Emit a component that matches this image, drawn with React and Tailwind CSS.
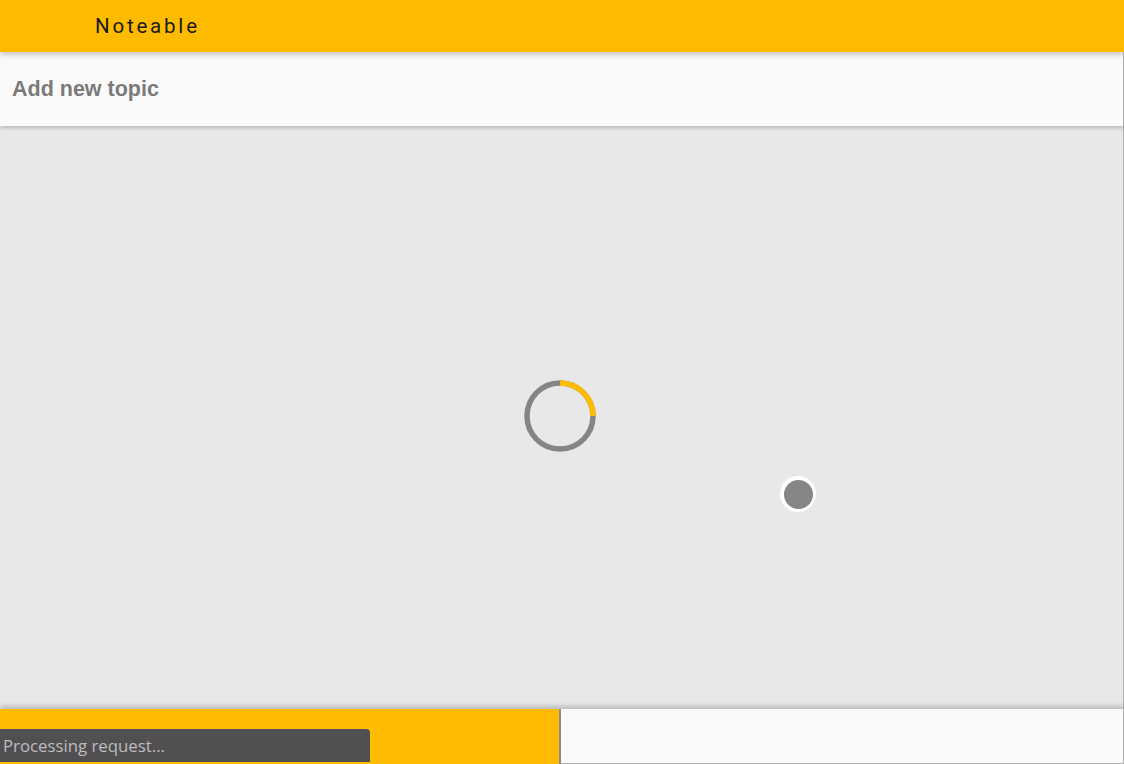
import React from "react";

function Spinner() {
  return (
    <svg width="76" height="76" viewBox="0 0 76 76">
      <circle cx="38" cy="38" r="33" fill="none" stroke="#858585" strokeWidth="5.5" />
      <path d="M38 5 A33 33 0 0 1 71 38" fill="none" stroke="#ffbb00" strokeWidth="5.5" />
    </svg>
  );
}

export default function App() {
  return (
    <div className="w-[1124px] h-[764px] flex flex-col bg-[#e8e8e8] overflow-hidden relative" style={{ fontFamily: "Roboto, sans-serif" }}>
      <header className="h-[52px] bg-[#ffbb00] flex items-center pl-[95px] shadow-[0_2px_6px_rgba(0,0,0,0.25)] relative z-20">
        <span className="text-[20.5px] tracking-[2.8px] text-[#1a1a1a]">Noteable</span>
      </header>

      <div className="h-[74px] bg-[#fafafa] flex items-center pl-3 shadow-[0_2px_4px_rgba(0,0,0,0.2)] relative z-10 border-r border-[#b0b0b0]">
        <span className="text-[21.5px] font-bold text-[#7a7a7a]" style={{ fontFamily: "'Liberation Sans', Arial, sans-serif" }}>
          Add new topic
        </span>
      </div>

      <main className="flex-1 relative border-r border-[#b0b0b0]">
        <div className="absolute left-[522px] top-[252px]">
          <Spinner />
        </div>
        <div className="absolute left-[780px] top-[350px] w-[36px] h-[36px] rounded-full bg-white flex items-center justify-center">
          <div className="w-[29px] h-[29px] rounded-full bg-[#858585]" />
        </div>
      </main>

      <footer className="h-[55px] flex shadow-[0_-3px_5px_rgba(0,0,0,0.2)] relative z-10">
        <div className="w-[561px] bg-[#ffbb00] border-r-2 border-[#8a8a8a]" />
        <div className="flex-1 bg-[#fafafa] border-r border-b border-[#b0b0b0]" />
      </footer>

      <div className="absolute left-0 bottom-[2px] w-[370px] h-[33px] bg-[#524f52] rounded-tr-[4px] flex items-center pl-[3px] z-30">
        <span className="text-[16.8px] text-[#bdbdbd]" style={{ fontFamily: "'Open Sans', 'Noto Sans', sans-serif" }}>
          Processing request...
        </span>
      </div>
    </div>
  );
}
